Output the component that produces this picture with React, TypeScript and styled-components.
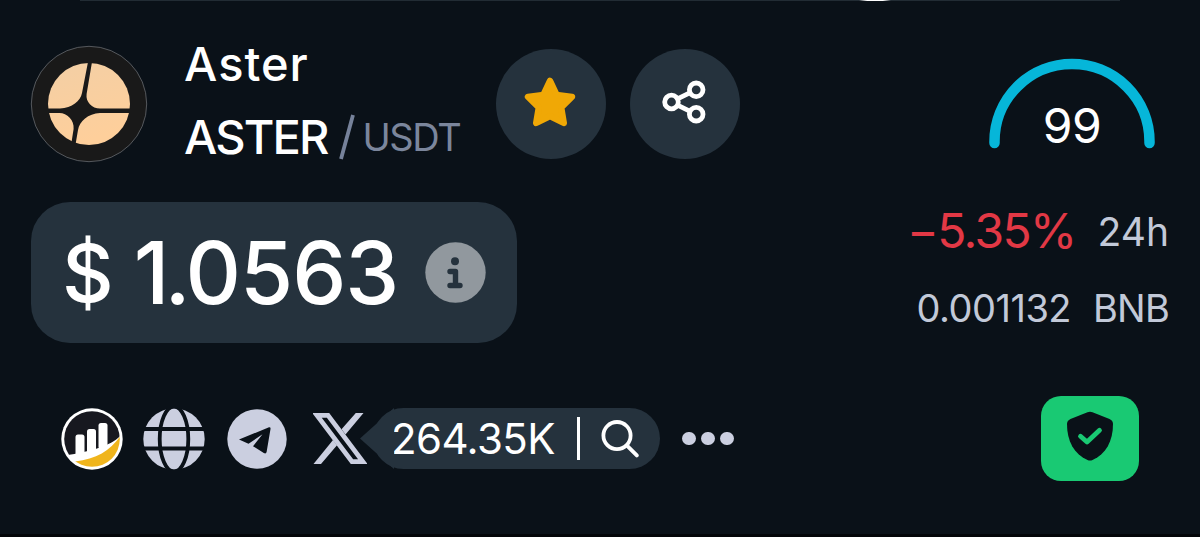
import React from 'react';
import styled, { createGlobalStyle } from 'styled-components';

const GlobalStyle = createGlobalStyle`
  * {
    box-sizing: border-box;
  }

  body {
    margin: 0;
    background: #0a1118;
    font-family: 'Inter', 'Liberation Sans', sans-serif;
    color: #fff;
  }

  svg {
    display: block;
    flex: none;
  }
`;

const TokenLogo = () => (
  <svg width="118" height="118" viewBox="0 0 118 118">
    <circle cx="59" cy="59" r="57.7" fill="#191919" stroke="#666a6e" strokeWidth="0.8" />
    <defs>
      <linearGradient id="peach" x1="0" y1="0" x2="0.3" y2="1">
        <stop offset="0" stopColor="#f3cfa5" />
        <stop offset="1" stopColor="#fecf9b" />
      </linearGradient>
    </defs>
    <circle cx="59" cy="59" r="41" fill="url(#peach)" />
    <path
      fill="#191919"
      d="M58 17 L62 17 L56.6 49 C55.5 57 62 63.5 70 63.6 L101 63.6 L101 67.9 L70 67.9 C58 68.5 49.5 76 48 85 L45.6 99 L41.4 98 L43.6 84 C44.5 75 37 68 29.5 67.9 L17 67.9 L17 63.6 L30 63.6 C42 63 50.5 56 52 48 Z"
    />
  </svg>
);

const StarIcon = () => (
  <svg width="52" height="51" viewBox="0 0 52 51">
    <path
      d="M26 3.8 L32.6 17.8 L48 19.8 L37.2 30.5 L39.8 46 L26 39.2 L12.2 46 L14.8 30.5 L4 19.8 L19.4 17.8 Z"
      fill="#f0a806"
      stroke="#f0a806"
      strokeWidth="6.4"
      strokeLinejoin="round"
    />
  </svg>
);

const ShareIcon = () => (
  <svg width="44" height="44" viewBox="0 0 44 44" fill="none" stroke="#fff" strokeWidth="4.8">
    <circle cx="9.5" cy="22" r="6.8" />
    <circle cx="34.2" cy="9.8" r="6.8" />
    <circle cx="34.2" cy="34.2" r="6.8" />
    <path d="M15.5 18.8 L28.2 12.6 M15.5 25.2 L28.2 31.4" />
  </svg>
);

const InfoIcon = () => (
  <svg width="61" height="61" viewBox="0 0 61 61">
    <circle cx="30.5" cy="30.5" r="30.2" fill="#91989e" />
    <circle cx="30" cy="19.2" r="4" fill="#25323d" />
    <path
      d="M25 29.5 H30.5 V43.5 M25 43.5 H35"
      fill="none"
      stroke="#25323d"
      strokeWidth="5.4"
      strokeLinecap="round"
      strokeLinejoin="round"
    />
  </svg>
);

const CmcIcon = () => (
  <svg width="62" height="62" viewBox="0 0 62 62">
    <defs>
      <clipPath id="coinDisc">
        <circle cx="31" cy="31" r="27.8" />
      </clipPath>
    </defs>
    <circle cx="31" cy="31" r="30.7" fill="#fff" />
    <g clipPath="url(#coinDisc)">
      <path d="M0 0 H62 V25 C52 37 34 43 0 48 Z" fill="#17181f" />
      <path d="M14 53.5 C36 51 50 42 60 27 V62 H14 Z" fill="#f0b51c" />
    </g>
    <g fill="#fff">
      <rect x="14.5" y="26.5" width="9" height="23" rx="2.5" />
      <rect x="26" y="21" width="9" height="26" rx="2.5" />
      <rect x="37.5" y="15" width="9" height="26" rx="2.5" />
    </g>
  </svg>
);

const GlobeIcon = () => (
  <svg width="62" height="62" viewBox="0 0 62 62">
    <circle cx="31" cy="31" r="30.7" fill="#cbcfe0" />
    <g fill="none" stroke="#0a1118" strokeWidth="3.8">
      <ellipse cx="31" cy="31" rx="14.3" ry="32.5" />
      <path d="M0 21 H62 M0 40.5 H62" />
    </g>
  </svg>
);

const TelegramIcon = () => (
  <svg width="60" height="60" viewBox="0 0 60 60">
    <circle cx="30" cy="30" r="29.7" fill="#cbcfe0" />
    <path
      d="M12 30.5 L42 18.3 Q43.8 18 43.5 20 L39.6 43 Q39 45.3 36.800 44 L26 37.2 L35.5 25.3 L21.5 34.7 Z"
      fill="#0a1118"
    />
  </svg>
);

const XIcon = () => (
  <svg width="54" height="51" viewBox="0 0 54 51">
    <path d="M4 2.4 H15 L49.800 48.600 H39 Z" fill="none" stroke="#cbcfe0" strokeWidth="4.8" />
    <path
      d="M50.5 0 H42.8 L28.5 16.3 L32.5 21.500 Z M0.500 51 H8 L24 32.300 L20 27 Z"
      fill="#cbcfe0"
    />
  </svg>
);

const SearchIcon = () => (
  <svg width="38" height="38" viewBox="0 0 38 38" fill="none" stroke="#fff" strokeWidth="3.8">
    <circle cx="16" cy="15.6" r="13.600" />
    <path d="M26 25.600 L35.800 35.400" strokeLinecap="round" />
  </svg>
);

const ShieldIcon = () => (
  <svg width="48" height="50" viewBox="0 0 48 50">
    <path
      d="M21.5 1.2 Q24 0.2 26.5 1.2 L43.5 8 Q47 9.5 47 13 C47 30 40 43 26.5 49 Q24 50 21.5 49 C8 43 1 30 1 13 Q1 9.5 4.5 8 Z"
      fill="#0a1118"
    />
    <path
      d="M14.5 25.3 L21 31 L33.5 19.3"
      fill="none"
      stroke="#19c973"
      strokeWidth="4.8"
      strokeLinecap="round"
      strokeLinejoin="round"
    />
  </svg>
);

const App = () => {
  return (
    <Panel>
      <GlobalStyle />
      <TopEdge />
      <Header>
        <TokenLogo />
        <Names>
          <Label size={47} weight={500} spacing={1}>Aster</Label>
          <Pair>
            <Label size={47} weight={500} spacing={-1.9}>ASTER</Label>
            <Slash viewBox="0 0 16 46">
              <path d="M2 45 L14 1" stroke="#76829a" strokeWidth="3.8" />
            </Slash>
            <Label size={38} color="#7b869c" spacing={-1.4}>USDT</Label>
          </Pair>
        </Names>
        <Actions>
          <RoundButton aria-label="favorite"><StarIcon /></RoundButton>
          <RoundButton aria-label="share"><ShareIcon /></RoundButton>
        </Actions>
        <Gauge>
          <svg width="168" height="92" viewBox="0 0 168 92">
            <path
              d="M6.5 85 V83.5 A77.5 77.5 0 0 1 161.5 83.5 V85"
              fill="none"
              stroke="#06b6d9"
              strokeWidth="10.5"
              strokeLinecap="round"
            />
          </svg>
          <Score><Label size={48} spacing={-0.5}>99</Label></Score>
        </Gauge>
      </Header>
      <Market>
        <PriceBox>
          <Label size={80} weight={500} spacing={0}>$</Label>
          <Price size={86} weight={500} spacing={-1}><b>1.</b>0563</Price>
          <InfoIcon />
        </PriceBox>
        <Stats>
          <Stat>
            <Label size={48} color="#e23845" spacing={-1.6}>−5.35%</Label>
            <Label size={39} color="#c2c9d8" spacing={0}>24h</Label>
          </Stat>
          <Stat>
            <Label size={38} color="#c2c9d8" spacing={-0.5}>0.001132</Label>
            <Label size={38} color="#c2c9d8" spacing={-0.8}>BNB</Label>
          </Stat>
        </Stats>
      </Market>
      <Footer>
        <CmcIcon />
        <Links>
          <GlobeIcon />
          <TelegramIcon />
        </Links>
        <XIcon />
        <Followers>
          <Tip viewBox="0 0 34 61"><path d="M0 30.5 L34 0 V61 Z" fill="#25323d" /></Tip>
          <Label size={42} spacing={-0.6}>264.35K</Label>
          <Bar />
          <SearchIcon />
        </Followers>
        <Dots><i /><i /><i /></Dots>
        <Badge><ShieldIcon /></Badge>
      </Footer>
    </Panel>
  );
};

const Panel = styled.main`
  display: flex;
  flex-direction: column;
  width: 1200px;
  height: 537px;
  overflow: hidden;
  border-bottom: 3px solid #030508;
  background: #0a1118;
`;

const TopEdge = styled.div`
  flex: none;
  height: 1px;
  margin: 0 80px;
  background: radial-gradient(ellipse 16px 4px at 795px 0, #fff 50%, #222c34 100%);
`;

const Label = styled.span<{ size: number; spacing: number; weight?: number; color?: string }>`
  font-size: ${(props) => props.size}px;
  font-weight: ${(props) => props.weight || 400};
  letter-spacing: ${(props) => props.spacing}px;
  color: ${(props) => props.color || '#fff'};
  line-height: 1;
  white-space: nowrap;
`;

const Price = styled(Label)`
  margin-left: 20px;

  b {
    font-weight: inherit;
    letter-spacing: -5px;
  }
`;

const Header = styled.header`
  display: flex;
  flex: none;
  align-items: flex-start;
  height: 201px;
  padding: 44px 42px 0 30px;
`;

const Names = styled.div`
  display: flex;
  flex-direction: column;
  gap: 26px;
  width: 312px;
  margin-left: 36px;
  margin-top: -5px;
`;

const Pair = styled.div`
  display: flex;
  align-items: center;
  height: 47px;
`;

const Slash = styled.svg`
  width: 16px;
  height: 46px;
  margin: 0 7px 0 12px;
`;

const Actions = styled.div`
  display: flex;
  gap: 24px;
  margin-top: 4px;
`;

const RoundButton = styled.button`
  display: flex;
  align-items: center;
  justify-content: center;
  width: 110px;
  height: 110px;
  padding: 0 2px 4px 0;
  border: 0;
  border-radius: 50%;
  background: #25323d;
`;

const Gauge = styled.div`
  position: relative;
  margin: 13px 2px 0 auto;
`;

const Score = styled.div`
  position: absolute;
  top: 44px;
  left: 0;
  width: 100%;
  text-align: center;
`;

const Market = styled.section`
  display: flex;
  flex: none;
  justify-content: space-between;
  height: 141px;
  padding: 0 31px;
`;

const PriceBox = styled.div`
  display: flex;
  align-items: center;
  width: 486px;
  height: 141px;
  padding: 0 31px;
  border-radius: 39px;
  background: #25323d;

  svg {
    margin-left: auto;
  }
`;

const Stats = styled.div`
  display: flex;
  flex-direction: column;
  align-items: flex-end;
  gap: 34px;
  padding-top: 5px;
`;

const Stat = styled.div`
  display: flex;
  align-items: center;
  gap: 22px;
`;

const Footer = styled.footer`
  display: flex;
  flex: none;
  align-items: center;
  height: 85px;
  margin-top: 53px;
  padding: 0 61px;
`;

const Links = styled.div`
  display: flex;
  align-items: center;
  gap: 22px;
  margin: 0 26px 0 20px;
`;

const Followers = styled.div`
  position: relative;
  display: flex;
  align-items: center;
  width: 287px;
  height: 61px;
  margin-left: 6px;
  padding: 0 21px 0 18px;
  border-radius: 31px;
  background: #25323d;
`;

const Tip = styled.svg`
  position: absolute;
  top: 0;
  left: -13px;
  width: 34px;
  height: 61px;
`;

const Bar = styled.div`
  width: 3px;
  height: 43px;
  margin: 0 21px 0 auto;
  background: #fff;
`;

const Dots = styled.div`
  display: flex;
  gap: 5.5px;
  margin-left: 22px;

  i {
    width: 13.5px;
    height: 13.5px;
    border-radius: 50%;
    background: #cbcfe0;
  }
`;

const Badge = styled.div`
  display: flex;
  justify-content: center;
  width: 98px;
  height: 85px;
  margin-left: auto;
  padding-top: 15px;
  border-radius: 20px;
  background: #19c973;
`;

export default App;
